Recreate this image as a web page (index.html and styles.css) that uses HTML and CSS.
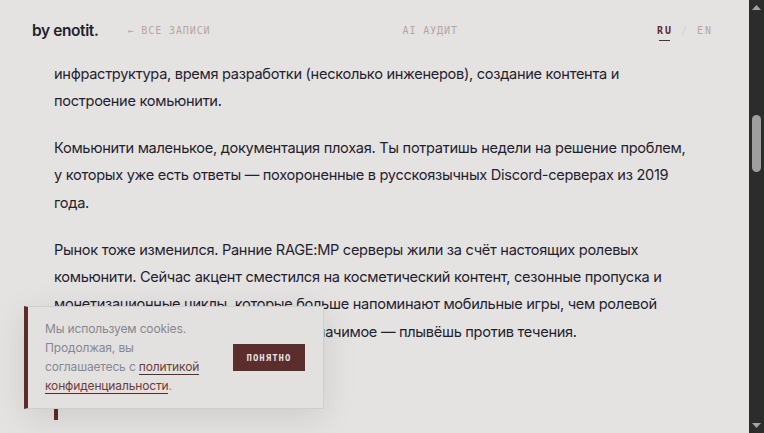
FILE: index.html
```html
<!DOCTYPE html>
<html lang="ru">
<head>
<meta charset="utf-8">
<title>by enotit.</title>
<link rel="stylesheet" href="styles.css">
</head>
<body>
<div class="window">
  <div class="page">
    <header class="header">
      <div class="left">
        <span class="logo">by enotit<span class="dot">.</span></span>
        <a class="nav">← ВСЕ ЗАПИСИ</a>
      </div>
      <a class="nav nav-center">AI АУДИТ</a>
      <div class="lang">
        <span class="active">RU</span>
        <span class="slash">/</span>
        <span class="lang-off">EN</span>
      </div>
    </header>
    <article class="article">
      <p>инфраструктура, время разработки (несколько инженеров), создание контента и<br>построение комьюнити.</p>
      <p>Комьюнити маленькое, документация плохая. Ты потратишь недели на решение проблем,<br>у которых уже есть ответы — похороненные в русскоязычных Discord-серверах из 2019<br>года.</p>
      <p>Рынок тоже изменился. Ранние RAGE:MP серверы жили за счёт настоящих ролевых<br>комьюнити. Сейчас акцент сместился на косметический контент, сезонные пропуска и<br>монетизационные циклы, которые больше напоминают мобильные игры, чем ролевой<br>опыт. Если хочешь построить что-то значимое — плывёшь против течения.</p>
      <div class="quote-bar"></div>
    </article>
    <aside class="cookie">
      <p class="cookie-text">Мы используем cookies.<br>Продолжая, вы<br>соглашаетесь с <a class="cookie-link">политикой</a><br><a class="cookie-link">конфиденциальности</a>.</p>
      <button class="cookie-btn">ПОНЯТНО</button>
    </aside>
  </div>
  <div class="scrollbar">
    <svg class="arrow" width="15" height="15" viewBox="0 0 15 15"><path d="M3 10 L7.5 5 L12 10 Z" fill="#a3a3a3"/></svg>
    <div class="track"><div class="thumb"></div></div>
    <svg class="arrow" width="15" height="15" viewBox="0 0 15 15"><path d="M3 5 L12 5 L7.5 10 Z" fill="#a3a3a3"/></svg>
  </div>
</div>
</body>
</html>
```
FILE: styles.css
```css
* { box-sizing: border-box; }
html, body { margin: 0; height: 100%; overflow: hidden; }
body { background: #e5e3e1; font-family: Inter, "Noto Sans", sans-serif; color: #1f2230; }
.window { display: flex; width: 764px; height: 433px; }
.page { position: relative; flex: 1; min-width: 0; overflow: hidden; background: #e5e3e1; }
.scrollbar { width: 15px; background: #2c2c2c; display: flex; flex-direction: column; }
.arrow { display: block; flex: none; }
.track { flex: 1; padding-top: 100px; display: flex; justify-content: center; }
.thumb { width: 9px; height: 57px; border-radius: 5px; background: #9f9f9f; }
.header { display: flex; justify-content: space-between; align-items: center; height: 60px; padding: 0 36px 0 32px; }
.left { display: flex; align-items: center; gap: 29px; }
.logo { font-size: 15.5px; font-weight: 600; letter-spacing: -0.4px; color: #1f2230; }
.dot { color: #5c2b2b; }
.nav { font-family: "DejaVu Sans Mono", monospace; font-size: 10px; letter-spacing: 0.9px; color: #b5a5a5; }
.nav-center { margin-right: 7px; }
.lang { display: flex; align-items: center; gap: 8px; font-family: "DejaVu Sans Mono", monospace; font-size: 10px; letter-spacing: 2px; }
.active { position: relative; color: #5c2b2b; font-weight: 700; }
.active::after { content: ""; position: absolute; left: 2px; right: 3px; bottom: -5px; height: 1px; background: #5c2b2b; }
.slash { color: #d5cdcd; }
.lang-off { color: #b5a5a5; }
.article { padding: 1px 54px 0; }
.article p { margin: 0 0 19.6px; font-size: 14.6px; letter-spacing: -0.3px; line-height: 27.3px; white-space: nowrap; }
.quote-bar { width: 4px; height: 56px; background: #5c2b2b; margin-top: -1px; }
.cookie { position: absolute; left: 24px; bottom: 24px; width: 300px; height: 103px; display: flex; align-items: center; justify-content: space-between; padding: 0 18px 0 17px; background: #e3e1df; border: 1px solid #d0cecc; border-left: 4px solid #5c2b2b; box-shadow: 0 8px 32px rgba(0,0,0,.1); }
.cookie-text { margin: 0 0 2px; font-size: 12px; letter-spacing: -0.15px; line-height: 19px; color: #858793; white-space: nowrap; }
.cookie-link { color: #6b3b3b; border-bottom: 1px solid #5c2b2b; }
.cookie-btn { flex: none; width: 72px; height: 27px; border: 0; padding: 0; background: #5c2d2d; color: #e5e3e1; font-family: "DejaVu Sans Mono", monospace; font-size: 9px; font-weight: 700; letter-spacing: 1px; }
```
